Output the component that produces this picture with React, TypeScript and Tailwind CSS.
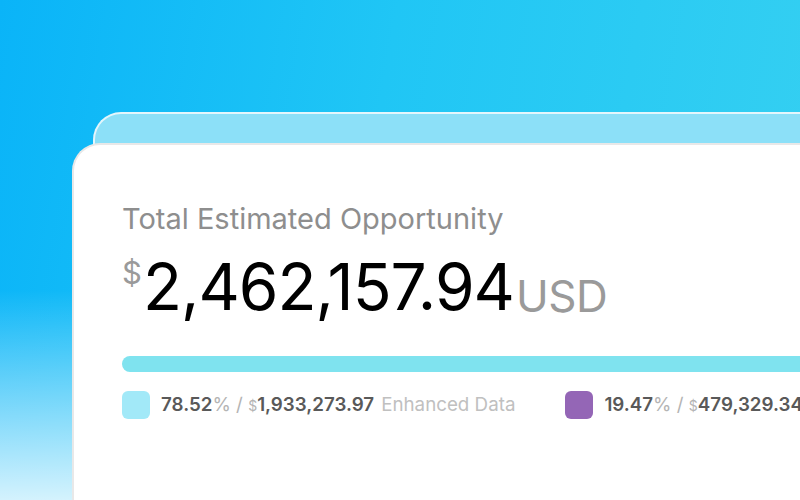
import React from 'react';

const segments = [
  { pct: '78.52', amount: '1,933,273.97', label: 'Enhanced Data', color: 'bg-[#a2e9f8]' },
  { pct: '19.47', amount: '479,329.34', label: '', color: 'bg-[#9466b6]' },
];

export default function App() {
  return (
    <div
      className="w-[800px] h-[500px] overflow-hidden bg-[linear-gradient(to_bottom,rgba(255,255,255,0)_58%,rgba(255,255,255,0.82)_100%),linear-gradient(100deg,#0ab4f8_0%,#20c6f5_45%,#36d0f1_100%)]"
      style={{ fontFamily: 'Inter, "Noto Sans", sans-serif' }}
    >
      {/* Back card */}
      <div className="ml-[93px] mt-[112px] h-[600px] rounded-tl-[28px] border-t-2 border-l-2 border-[#e4f6fc] bg-[#8ce0f8]">
        {/* Front card */}
        <div className="-ml-[23px] mt-[29px] h-[600px] rounded-tl-[28px] border-t-2 border-l-2 border-[#e8e8e8] bg-white pl-[48px] pt-[54px]">
          <div className="text-[29px] leading-[40px] text-[#8e8e8e] tracking-[0em]">Total Estimated Opportunity</div>

          <div className="mt-[12px] flex items-start whitespace-nowrap">
            <span className="mt-[4px] text-[31px] leading-[36px] text-[#9a9a9a]">$</span>
            <span className="ml-[1px] text-[64px] leading-[72px] text-black tracking-[-0.015em]">2,462,157.94</span>
            <span className="mt-[19px] ml-[2px] text-[44px] leading-[52px] text-[#9a9a9a] tracking-[-0.01em]">USD</span>
          </div>

          <div className="mt-[33px] h-[16px] rounded-l-full bg-[#7fe3ef]" />

          <div className="mt-[19px] flex items-center gap-[50px] whitespace-nowrap text-[18.75px]">
            {segments.map((s) => (
              <div key={s.pct} className="flex items-center gap-[11px]">
                <div className={`w-[28px] h-[28px] shrink-0 rounded-[6px] ${s.color}`} />
                <div className="text-[#595959]">
                  <span className="font-semibold">{s.pct}</span>
                  <span className="text-[#b4b4b4]">% / </span>
                  <span className="text-[14px] text-[#b4b4b4]">$</span>
                  <span className="font-semibold">{s.amount}</span>
                  {s.label && <span className="ml-[7px] text-[#c0c0c0]">{s.label}</span>}
                </div>
              </div>
            ))}
          </div>
        </div>
      </div>
    </div>
  );
}
